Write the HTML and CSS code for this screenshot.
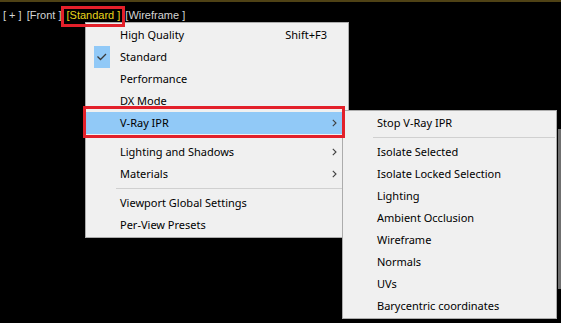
FILE: index.html
```html
<!DOCTYPE html>
<html>
<head>
<meta charset="utf-8">
<link rel="stylesheet" href="styles.css">
</head>
<body>
<div class="viewport">
  <div class="topline"></div>
  <div class="labels">
    <span class="vlabel">[ + ]</span>
    <span class="vlabel">[Front ]</span>
    <span class="vlabel active">[Standard ]</span>
    <span class="vlabel">[Wireframe ]</span>
  </div>
  <div class="edge-strip"></div>

  <div class="menu main-menu">
    <div class="item"><span class="gutter"></span><span class="text">High Quality</span><span class="shortcut">Shift+F3</span><span class="arrow"></span></div>
    <div class="item"><span class="gutter"><span class="checkbox"><svg width="16" height="22" viewBox="0 0 16 22"><polyline points="3.5,10.5 6.5,13.5 12,8" fill="none" stroke="#3a3a3a" stroke-width="1.3"/></svg></span></span><span class="text">Standard</span><span class="arrow"></span></div>
    <div class="item"><span class="gutter"></span><span class="text">Performance</span><span class="arrow"></span></div>
    <div class="item"><span class="gutter"></span><span class="text">DX Mode</span><span class="arrow"></span></div>
    <div class="item hot"><span class="gutter"></span><span class="text">V-Ray IPR</span><span class="arrow"><svg width="5" height="8" viewBox="0 0 5 8"><polyline points="0.8,0.8 4,4 0.8,7.2" fill="none" stroke="#404040" stroke-width="1.1"/></svg></span></div>
    <div class="sep"></div>
    <div class="item"><span class="gutter"></span><span class="text">Lighting and Shadows</span><span class="arrow"><svg width="5" height="8" viewBox="0 0 5 8"><polyline points="0.8,0.8 4,4 0.8,7.2" fill="none" stroke="#404040" stroke-width="1.1"/></svg></span></div>
    <div class="item"><span class="gutter"></span><span class="text">Materials</span><span class="arrow"><svg width="5" height="8" viewBox="0 0 5 8"><polyline points="0.8,0.8 4,4 0.8,7.2" fill="none" stroke="#404040" stroke-width="1.1"/></svg></span></div>
    <div class="sep"></div>
    <div class="item"><span class="gutter"></span><span class="text">Viewport Global Settings</span><span class="arrow"></span></div>
    <div class="item"><span class="gutter"></span><span class="text">Per-View Presets</span><span class="arrow"></span></div>
  </div>

  <div class="menu sub-menu">
    <div class="item"><span class="gutter"></span><span class="text">Stop V-Ray IPR</span></div>
    <div class="sep"></div>
    <div class="item"><span class="gutter"></span><span class="text">Isolate Selected</span></div>
    <div class="item"><span class="gutter"></span><span class="text">Isolate Locked Selection</span></div>
    <div class="item"><span class="gutter"></span><span class="text">Lighting</span></div>
    <div class="item"><span class="gutter"></span><span class="text">Ambient Occlusion</span></div>
    <div class="item"><span class="gutter"></span><span class="text">Wireframe</span></div>
    <div class="item"><span class="gutter"></span><span class="text">Normals</span></div>
    <div class="item"><span class="gutter"></span><span class="text">UVs</span></div>
    <div class="item"><span class="gutter"></span><span class="text">Barycentric coordinates</span></div>
  </div>

  <div class="redbox redbox-label"></div>
  <div class="redbox redbox-item"></div>
</div>
</body>
</html>
```
FILE: styles.css
```css
html, body {
  margin: 0;
  padding: 0;
  background: #000;
}
.viewport {
  position: relative;
  width: 561px;
  height: 323px;
  overflow: hidden;
  background: #000;
}
.topline {
  height: 2px;
  background: #4f4215;
}
.labels {
  display: flex;
  gap: 5px;
  padding: 7px 0 0 3px;
  font-family: "Liberation Sans", Arial, sans-serif;
  font-size: 11px;
  line-height: 13px;
  color: #d4d4d4;
}
.vlabel.active {
  color: #e8d41c;
}
.edge-strip {
  position: absolute;
  left: 558px;
  top: 129px;
  width: 3px;
  height: 160px;
  background: #6f6f6f;
}
.menu {
  position: absolute;
  background: #f0f0f0;
  border: 1px solid #acacac;
  padding: 1px 0;
  font-family: "Noto Sans", sans-serif;
  font-size: 11px;
  color: #000;
  box-sizing: border-box;
}
.main-menu {
  left: 85px;
  top: 22px;
  width: 264px;
}
.sub-menu {
  left: 342px;
  top: 110px;
  width: 215px;
}
.item {
  display: flex;
  align-items: center;
  height: 22px;
  line-height: 22px;
  white-space: nowrap;
}
.item.hot {
  background: #91c9f7;
}
.gutter {
  width: 30px;
  height: 22px;
  flex: none;
}
.checkbox {
  display: block;
  margin-left: 8px;
  width: 16px;
  height: 22px;
  background: #91c9f7;
}
.checkbox svg {
  display: block;
}
.text {
  padding-left: 4px;
  flex: 1;
}
.shortcut {
  flex: none;
}
.arrow {
  flex: none;
  width: 21px;
  height: 22px;
  display: flex;
  align-items: center;
}
.arrow svg {
  display: block;
  margin-left: 5px;
}
.sep {
  height: 7px;
  margin-left: 30px;
  margin-right: 1px;
  position: relative;
}
.sep::after {
  content: "";
  position: absolute;
  left: 0;
  right: 0;
  top: 3px;
  height: 1px;
  background: #d0d0d0;
}
.redbox {
  position: absolute;
  border: 3px solid #e3202a;
  box-sizing: border-box;
}
.redbox-label {
  left: 61px;
  top: 6px;
  width: 64px;
  height: 21px;
}
.redbox-item {
  left: 83px;
  top: 106px;
  width: 262px;
  height: 32px;
}
```
